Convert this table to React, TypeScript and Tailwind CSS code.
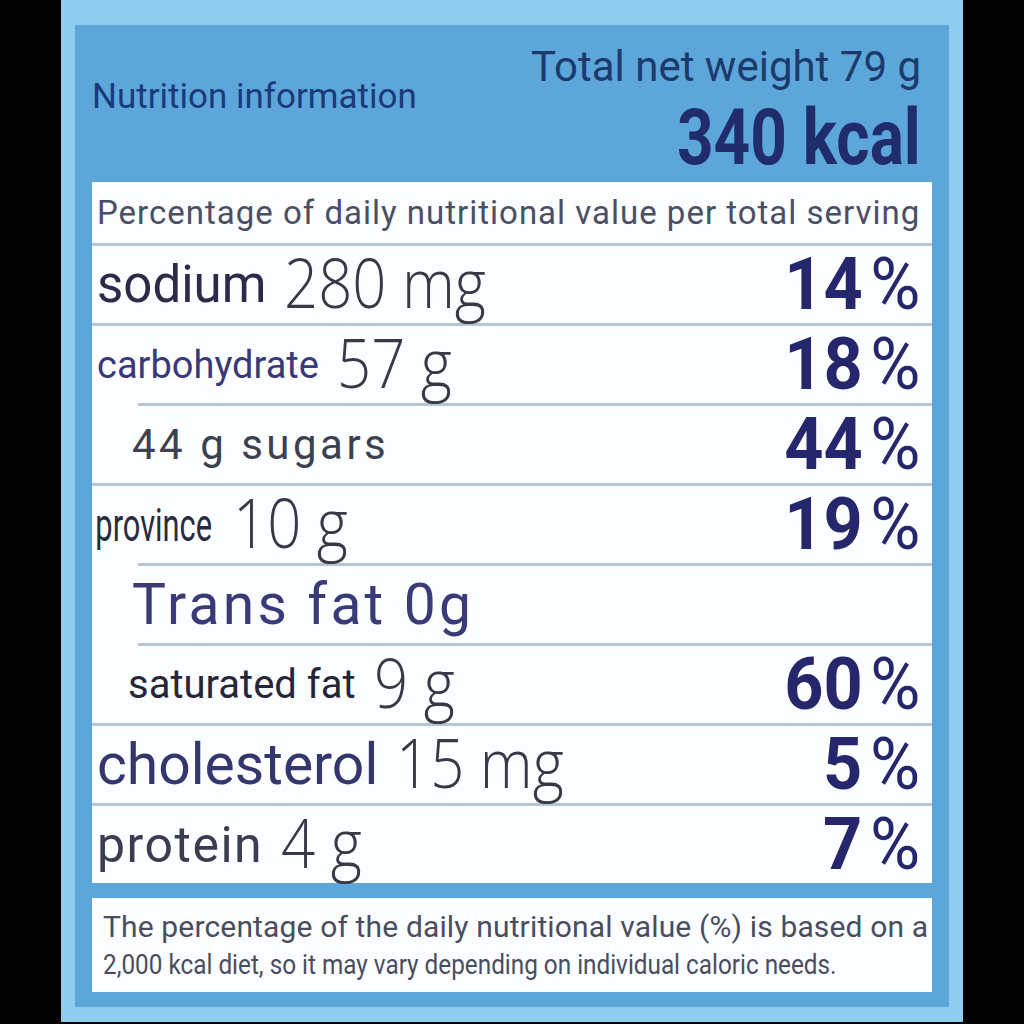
import React from "react";

type Row = {
  label: string;
  labelCls: string;
  value?: string;
  pct?: string;
  indent?: boolean;
};

const rows: Row[] = [
  { label: "sodium", labelCls: "pl-[5px] text-[51px] text-[#2a2b48]", value: "280 mg", pct: "14" },
  { label: "carbohydrate", labelCls: "pl-[5px] text-[38px] text-[#38387a]", value: "57 g", pct: "18" },
  { label: "44 g sugars", labelCls: "pl-[40px] text-[42px] tracking-[3.5px] text-[#3c4152]", pct: "44", indent: true },
  { label: "province", labelCls: "pl-[5px] text-[46px] inline-block origin-left scale-x-[0.67] w-[123px] text-[#2a2b40]", value: "10 g", pct: "19" },
  { label: "Trans fat 0g", labelCls: "pl-[40px] text-[57px] tracking-[3.2px] text-[#3b3a78]", indent: true },
  { label: "saturated fat", labelCls: "pl-[36px] text-[40px] text-[#26263a]", value: "9 g", pct: "60", indent: true },
  { label: "cholesterol", labelCls: "pl-[5px] text-[57px] text-[#35366e]", value: "15 mg", pct: "5" },
  { label: "protein", labelCls: "pl-[5px] text-[50px] tracking-[1.5px] text-[#393d52]", value: "4 g", pct: "7" },
];

function NutrientRow({ row }: { row: Row }) {
  return (
    <div>
      <div className={row.indent ? "ml-[46px] h-[3px] bg-[#b2c6d3]" : "h-[3px] bg-[#b2c6d3]"} />
      <div className="flex h-[77px] items-center justify-between pr-[12px]">
        <div className="flex items-center whitespace-nowrap">
          <span className={`leading-none ${row.labelCls}`}>{row.label}</span>
          {row.value && (
            <span className="mb-[6px] ml-[18px] inline-block origin-left scale-x-[0.88] font-['Open_Sans',sans-serif] text-[68px] font-light leading-none text-[#383847]">
              {row.value}
            </span>
          )}
        </div>
        {row.pct && (
          <span className="inline-block origin-right scale-x-[0.95] whitespace-nowrap text-[72px] leading-none text-[#25266b]">
            <span className="font-bold">{row.pct}</span>
            <span className="ml-[8px] font-normal">%</span>
          </span>
        )}
      </div>
    </div>
  );
}

export default function App() {
  return (
    <div className="h-[1024px] w-[1024px] bg-black pl-[61px] font-[Roboto,sans-serif]">
      <div className="h-[1022px] w-[902px] bg-[#8fcdef] px-[14px] pb-[15px] pt-[25px]">
        <div className="flex h-full flex-col bg-[#5ca6d9] px-[17px]">
          {/* header */}
          <div className="flex h-[157px] items-center justify-between pr-[11px]">
            <div className="-mt-[15px] text-[35px] leading-none text-[#1b3a7c]">
              Nutrition information
            </div>
            <div className="mt-[16px] flex flex-col items-end">
              <div className="text-[42px] leading-none text-[#1d3a6c]">Total net weight 79 g</div>
              <div className="mt-[12px] inline-block origin-right scale-x-[0.83] text-[77px] font-bold leading-none text-[#212c6c]">
                340 kcal
              </div>
            </div>
          </div>

          {/* table */}
          <div className="bg-[#fbfdfe]">
            <div className="flex h-[61px] items-center whitespace-nowrap pl-[5px] text-[33px] tracking-[1px] text-[#4a4f66]">
              Percentage of daily nutritional value per total serving
            </div>
            {rows.map((r) => (
              <NutrientRow key={r.label} row={r} />
            ))}
          </div>

          {/* footnote */}
          <div className="mt-[15px] flex h-[94px] flex-col justify-center bg-[#fbfdfe] pl-[11px] text-[#4a4d60]">
            <div className="whitespace-nowrap text-[30px] tracking-[0.15px] leading-[40px]">
              The percentage of the daily nutritional value (%) is based on a
            </div>
            <div className="inline-block origin-left scale-x-[0.9] whitespace-nowrap text-[27px] leading-[36px]">
              2,000 kcal diet, so it may vary depending on individual caloric needs.
            </div>
          </div>
        </div>
      </div>
    </div>
  );
}
